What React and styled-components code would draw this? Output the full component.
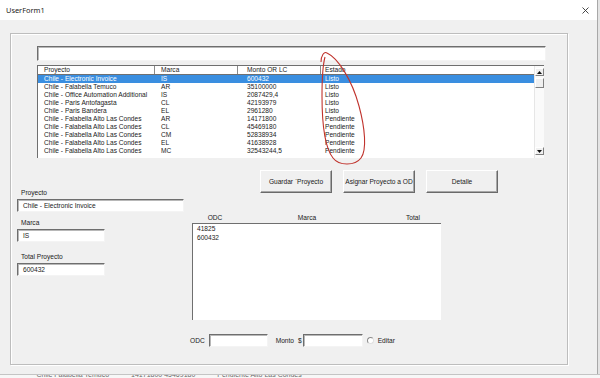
import React from "react";
import styled, { createGlobalStyle } from "styled-components";

const Global = createGlobalStyle`
  html, body { margin: 0; padding: 0; background: #d9d9d9; }
  body { width: 600px; height: 378px; overflow: hidden; font-family: "Liberation Sans", Arial, sans-serif; }
  * { box-sizing: border-box; }
`;

const Page = styled.div`
  position: relative;
  width: 600px;
  height: 378px;
  display: flex;
  flex-direction: column;
`;

const TopArea = styled.div`
  display: flex;
  height: 374px;
`;

const Window = styled.div`
  width: 597px;
  display: flex;
  flex-direction: column;
  background: #f0f0f0;
`;

const Peek = styled.div`
  flex: 1;
  background: #e4e4e4;
  border-left: 1px solid #a8a8a8;
`;

const TitleBar = styled.div`
  height: 20px;
  background: #ffffff;
  display: flex;
  align-items: center;
  justify-content: space-between;
  padding: 0 8px 0 6px;
`;

const Title = styled.span`
  font-family: "Noto Sans", "Open Sans", sans-serif;
  font-size: 7.4px;
  color: #222;
`;

const Client = styled.div`
  flex: 1;
  padding: 13px 0 0 10px;
`;

const Frame = styled.div`
  width: 558px;
  height: 332px;
  border: 1px solid #bdbdbd;
  box-shadow: inset 1px 1px 0 #ffffff, 1px 1px 0 #ffffff;
  display: flex;
  flex-direction: column;
`;

const TextBox = styled.div`
  width: ${(p) => p.$w}px;
  height: ${(p) => p.$h || 13}px;
  margin-top: ${(p) => p.$mt || 0}px;
  margin-left: ${(p) => p.$ml || 0}px;
  background: #fff;
  border-top: 1px solid #6e6e6e;
  border-left: 1px solid #6e6e6e;
  border-right: 1px solid #f4f4f4;
  border-bottom: 1px solid #f4f4f4;
  box-shadow: inset 1px 1px 0 #b8b8b8;
  font-size: 6.6px;
  line-height: 11px;
  padding-left: 5px;
  color: #1a1a1a;
  white-space: nowrap;
`;

const ListBox = styled.div`
  margin: 4px 0 0 26px;
  width: 507px;
  height: 93px;
  background: #fff;
  border-top: 1px solid #6f6f6f;
  border-left: 1px solid #6f6f6f;
  display: flex;
`;

const ListBody = styled.div`
  flex: 1;
  display: flex;
  flex-direction: column;
`;

const cols = "116px 83px 83px 1fr";
const pads = [6, 6, 9, 4];

const HeadRow = styled.div`
  display: grid;
  grid-template-columns: ${cols};
  height: 9px;
  border-bottom: 1px solid #707070;
`;

const HeadCell = styled.div`
  font-size: 6.6px;
  line-height: 8px;
  padding-left: ${(p) => p.$pad}px;
  border-left: ${(p) => (p.$first ? "none" : "1px solid #8a8a8a")};
  color: #1a1a1a;
  white-space: nowrap;
`;

const Row = styled.div`
  display: grid;
  grid-template-columns: ${cols};
  height: 8px;
  background: ${(p) => (p.$sel ? "#3a8ee0" : "transparent")};
  color: ${(p) => (p.$sel ? "#ffffff" : "#1a1a1a")};
`;

const Cell = styled.div`
  font-size: 6.6px;
  line-height: 8px;
  padding-left: ${(p) => p.$pad + (p.$first ? 0 : 1)}px;
  white-space: nowrap;
  overflow: hidden;
`;

const ScrollBar = styled.div`
  width: 10px;
  display: flex;
  flex-direction: column;
  justify-content: space-between;
  padding: 2px 0 3px;
  background: #fafafa;
  border-left: 1px solid #e6e6e6;
`;

const ScrollTop = styled.div`
  display: flex;
  flex-direction: column;
  gap: 2px;
`;

const ScrollBtn = styled.div`
  height: ${(p) => p.$h || 8}px;
  background: #f0f0f0;
  border: 1px solid;
  border-color: #fff #808080 #808080 #fff;
  display: flex;
  align-items: center;
  justify-content: center;
`;

const Lower = styled.div`
  display: flex;
`;

const LeftPane = styled.div`
  width: 176px;
  padding: 30px 0 0 6px;
  display: flex;
  flex-direction: column;
`;

const Label = styled.div`
  font-size: 6.6px;
  line-height: 9px;
  height: 9px;
  color: #1a1a1a;
  margin-top: ${(p) => p.$mt || 0}px;
  margin-left: ${(p) => p.$ml || 0}px;
  white-space: nowrap;
`;

const RightPane = styled.div`
  padding-left: 3px;
  display: flex;
  flex-direction: column;
`;

const ButtonRow = styled.div`
  display: flex;
  gap: 11px;
  margin: 12px 0 0 70px;
`;

const Button = styled.div`
  width: 72px;
  height: 23px;
  background: #f0f0f0;
  border: 1px solid;
  border-color: #ffffff #6a6a6a #6a6a6a #ffffff;
  box-shadow: inset -1px -1px 0 #a8a8a8;
  display: flex;
  align-items: center;
  justify-content: center;
  font-size: 6.6px;
  color: #1a1a1a;
  white-space: pre;
`;

const OdcHead = styled.div`
  display: grid;
  grid-template-columns: 46px 138px 74px;
  margin: 20px 0 0 2px;
  height: 9px;
`;

const OdcHeadCell = styled.div`
  text-align: center;
  font-size: 6.6px;
  line-height: 9px;
  color: #1a1a1a;
`;

const OdcBox = styled.div`
  margin: 1px 0 0 2px;
  width: 249px;
  height: 97px;
  background: #fff;
  border-top: 1px solid #6f6f6f;
  border-left: 1px solid #6f6f6f;
  padding: 0 0 0 4px;
`;

const OdcItem = styled.div`
  font-size: 6.6px;
  line-height: 9px;
  color: #1a1a1a;
`;

const BottomRow = styled.div`
  display: flex;
  align-items: center;
  margin-top: 14px;
  height: 13px;
`;

const Radio = styled.span`
  width: 7px;
  height: 7px;
  border-radius: 50%;
  border: 1px solid #8a8a8a;
  border-right-color: #e0e0e0;
  border-bottom-color: #e0e0e0;
  background: #fff;
  margin: 0 4px 0 4px;
`;

const Strip = styled.div`
  flex: 1;
  background: #f7f7f7;
  border-top: 1px solid #c4c4c4;
  display: flex;
  gap: 22px;
  padding-left: 2px;
  overflow: hidden;
`;

const StripText = styled.span`
  font-size: 7px;
  line-height: 8px;
  color: #6a6a6a;
  white-space: nowrap;
  margin-top: -4px;
`;

const Annot = styled.svg`
  position: absolute;
  left: 0;
  top: 0;
  pointer-events: none;
`;

const rows = [
  ["Chile - Electronic Invoice", "IS", "600432", "Listo"],
  ["Chile - Falabella Temuco", "AR", "35100000", "Listo"],
  ["Chile - Office Automation Additional", "IS", "2087429,4", "Listo"],
  ["Chile - Paris Antofagasta", "CL", "42193979", "Listo"],
  ["Chile - Paris Bandera", "EL", "2961280", "Listo"],
  ["Chile - Falabella Alto Las Condes", "AR", "14171800", "Pendiente"],
  ["Chile - Falabella Alto Las Condes", "CL", "45469180", "Pendiente"],
  ["Chile - Falabella Alto Las Condes", "CM", "52838934", "Pendiente"],
  ["Chile - Falabella Alto Las Condes", "EL", "41638928", "Pendiente"],
  ["Chile - Falabella Alto Las Condes", "MC", "32543244,5", "Pendiente"],
];

const heads = ["Proyecto", "Marca", "Monto OR LC", "Estado"];

const Arrow = ({ up }) => (
  <svg width="5" height="3" viewBox="0 0 5 3">
    <path d={up ? "M0 3 L2.5 0 L5 3 Z" : "M0 0 L2.5 3 L5 0 Z"} fill="#111" />
  </svg>
);

export default function App() {
  return (
    <>
      <Global />
      <Page>
        <TopArea>
          <Window>
            <TitleBar>
              <Title>UserForm1</Title>
              <svg width="7" height="7" viewBox="0 0 7 7">
                <path d="M0.5 0.5 L6.5 6.5 M6.5 0.5 L0.5 6.5" stroke="#333" strokeWidth="0.9" />
              </svg>
            </TitleBar>
            <Client>
              <Frame>
                <TextBox $w={509} $h={15} $mt={12} $ml={26} />
                <ListBox>
                  <ListBody>
                    <HeadRow>
                      {heads.map((h, i) => (
                        <HeadCell key={h} $pad={pads[i]} $first={i === 0}>
                          {h}
                        </HeadCell>
                      ))}
                    </HeadRow>
                    {rows.map((r, ri) => (
                      <Row key={ri} $sel={ri === 0}>
                        {r.map((c, ci) => (
                          <Cell key={ci} $pad={pads[ci]} $first={ci === 0}>
                            {c}
                          </Cell>
                        ))}
                      </Row>
                    ))}
                  </ListBody>
                  <ScrollBar>
                    <ScrollTop>
                      <ScrollBtn>
                        <Arrow up />
                      </ScrollBtn>
                      <ScrollBtn $h={10} />
                    </ScrollTop>
                    <ScrollBtn>
                      <Arrow />
                    </ScrollBtn>
                  </ScrollBar>
                </ListBox>
                <Lower>
                  <LeftPane>
                    <Label $ml={4}>Proyecto</Label>
                    <TextBox $w={167} $mt={2}>Chile - Electronic Invoice</TextBox>
                    <Label $ml={4} $mt={6}>Marca</Label>
                    <TextBox $w={88} $mt={2}>IS</TextBox>
                    <Label $ml={4} $mt={10}>Total Proyecto</Label>
                    <TextBox $w={88} $mt={2}>600432</TextBox>
                  </LeftPane>
                  <RightPane>
                    <ButtonRow>
                      <Button>Guardar `Proyecto</Button>
                      <Button>Asignar Proyecto a OD</Button>
                      <Button>Detalle</Button>
                    </ButtonRow>
                    <OdcHead>
                      <OdcHeadCell>ODC</OdcHeadCell>
                      <OdcHeadCell>Marca</OdcHeadCell>
                      <OdcHeadCell>Total</OdcHeadCell>
                    </OdcHead>
                    <OdcBox>
                      <OdcItem>41825</OdcItem>
                      <OdcItem>600432</OdcItem>
                    </OdcBox>
                    <BottomRow>
                      <Label>ODC</Label>
                      <TextBox $w={59} $ml={4} />
                      <Label $ml={8}>Monto</Label>
                      <Label $ml={4}>$</Label>
                      <TextBox $w={60} $ml={1} />
                      <Radio />
                      <Label>Editar</Label>
                    </BottomRow>
                  </RightPane>
                </Lower>
              </Frame>
            </Client>
          </Window>
          <Peek />
        </TopArea>
        <Strip>
          <StripText>"""""</StripText>
          <StripText>Chile Falabella Temuco</StripText>
          <StripText>14171800 45469180</StripText>
          <StripText>Pendiente Alto Las Condes</StripText>
        </Strip>
        <Annot width="600" height="378" viewBox="0 0 600 378">
          <path
            d="M321 62 C321 56 324 51 327 53 C338 58 352 80 359 106 C365 128 367 150 361 158 C355 166 339 166 333 158 C325 148 322 122 322 96 C322 80 322 68 325 57"
            fill="none"
            stroke="#c0322c"
            strokeWidth="1.1"
          />
        </Annot>
      </Page>
    </>
  );
}
